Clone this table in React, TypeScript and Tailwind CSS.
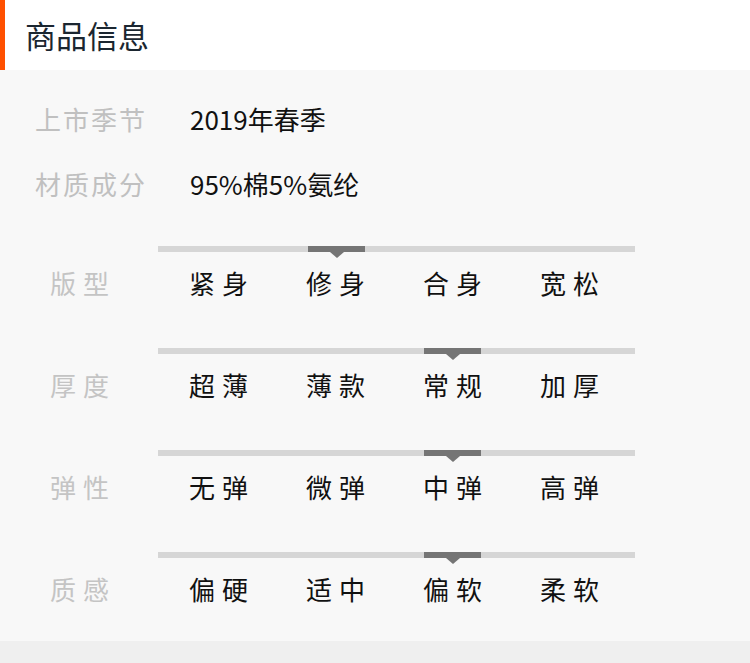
const info = [
  { label: "上市季节", value: "2019年春季" },
  { label: "材质成分", value: "95%棉5%氨纶" },
];

const scales = [
  { label: "版型", options: ["紧身", "修身", "合身", "宽松"], active: 1 },
  { label: "厚度", options: ["超薄", "薄款", "常规", "加厚"], active: 2 },
  { label: "弹性", options: ["无弹", "微弹", "中弹", "高弹"], active: 2 },
  { label: "质感", options: ["偏硬", "适中", "偏软", "柔软"], active: 2 },
];

const indicatorLeft = ["left-[31px]", "left-[150px]", "left-[266px]", "left-[383px]"];

function ScaleRow({ label, options, active }: { label: string; options: string[]; active: number }) {
  return (
    <div className="pt-[30px] pb-[15px]">
      <div className="relative ml-[158px] h-[6px] w-[477px] bg-[#d6d6d6]">
        <div className={`absolute top-0 h-[6px] w-[57px] bg-[#757575] ${indicatorLeft[active]}`}>
          <div className="absolute left-1/2 top-[6px] -ml-[7px] h-0 w-0 border-x-[7px] border-t-[6px] border-x-transparent border-t-[#757575]" />
        </div>
      </div>
      <div className="mt-[11px] flex h-[40px] items-center">
        <div className="w-[160px] pl-[50px] tracking-[7px] text-[#c4c4c4]">{label}</div>
        <div className="grid grid-cols-[repeat(4,117px)]">
          {options.map((o) => (
            <div key={o} className="pl-[7px] text-center tracking-[7px] text-[#111]">
              {o}
            </div>
          ))}
        </div>
      </div>
    </div>
  );
}

export default function App() {
  return (
    <div className="w-[750px] bg-[#efefef] font-['Noto_Sans_CJK_SC','Noto_Sans',sans-serif]">
      <div className="flex h-[70px] items-center border-l-[5px] border-[#ff5000] bg-white pl-[20px] text-[31px] text-[#1b2630]">
        商品信息
      </div>
      <div className="bg-[#f8f8f8] pt-[16px] pb-[17px] text-[26px] leading-none">
        {info.map((r) => (
          <div key={r.label} className="flex h-[65px] items-center">
            <div className="w-[190px] pl-[35px] tracking-[2px] text-[#c0c0c0]">{r.label}</div>
            <div className="text-[#111]">{r.value}</div>
          </div>
        ))}
        {scales.map((s) => (
          <ScaleRow key={s.label} {...s} />
        ))}
      </div>
      <div className="h-[22px]" />
    </div>
  );
}
